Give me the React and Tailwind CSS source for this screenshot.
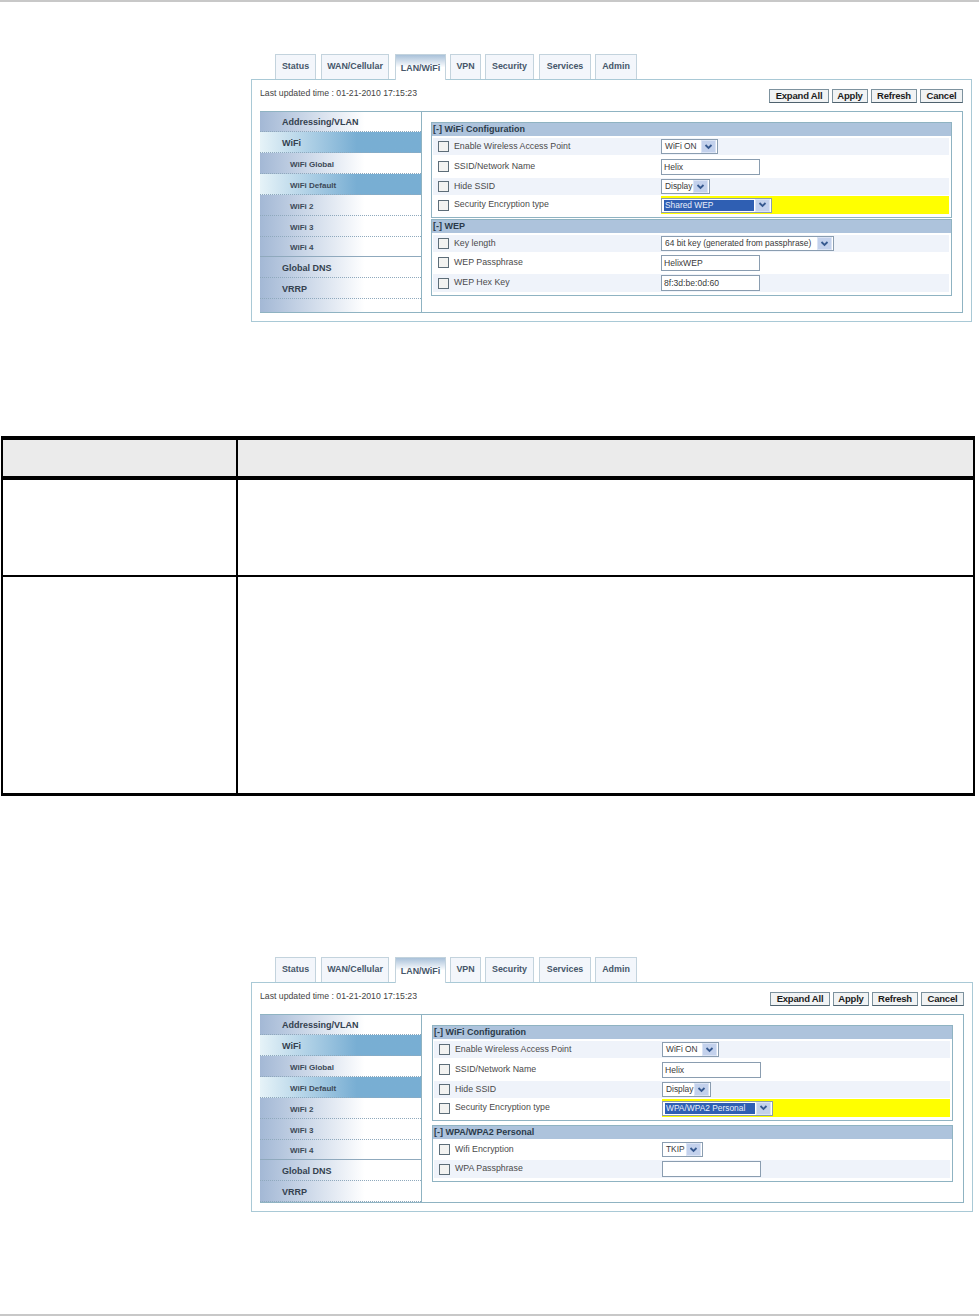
const font = { fontFamily: '"Liberation Sans", Arial, sans-serif' };

function Chevron() {
  return (
    <span className="flex items-center justify-center w-[15px] h-[13px] bg-[#c3d1ec] border border-[#dbe4f5] shrink-0">
      <svg width="9" height="6" viewBox="0 0 9 6">
        <polyline points="1.5,1 4.5,4 7.5,1" fill="none" stroke="#36598f" strokeWidth="1.8" />
      </svg>
    </span>
  );
}

function Select({ text, w, selected }) {
  return (
    <div className={`flex items-center justify-between h-[15px] border border-[#8a9db0] bg-white pl-[3px] pr-px text-[8.4px] text-[#3a3a3a] ${w}`}>
      <span className={selected ? 'flex-1 -ml-px mr-px h-[11px] leading-[11px] bg-[#2f5fb3] text-[#e8eefa] pl-px' : 'whitespace-nowrap'}>{text}</span>
      <Chevron />
    </div>
  );
}

function Input({ text }) {
  return (
    <div className="w-[99px] h-[16px] border border-[#8a9db0] bg-white pl-[2px] text-[8.6px] leading-[14px] text-[#3a3a3a]">{text}</div>
  );
}

function Row({ label, alt, cls, yellow, children }) {
  return (
    <div className={`flex items-center ml-px mr-[2px] ${cls} ${alt ? 'bg-[#eff3fa]' : ''}`}>
      <div className="w-[5px]" />
      <div className="w-[11px] h-[11px] border border-[#5d6d78] bg-[#f3f3f1] shrink-0" />
      <div className="w-[5px]" />
      <div className="w-[207px] text-[8.8px] text-[#4a4a4a] whitespace-nowrap">{label}</div>
      <div className={`flex-1 self-stretch flex items-center ${yellow ? 'bg-[#ffff00]' : ''}`}>{children}</div>
    </div>
  );
}

function Box({ title, cls, children }) {
  return (
    <div className={`border border-[#8fb3c2] ${cls}`}>
      <div className="h-[13px] bg-[#adc3dc] pl-px text-[9px] leading-[13px] font-bold text-[#2a3a4a]">{title}</div>
      {children}
    </div>
  );
}

function Tab({ label, w, ml, active }) {
  return (
    <div
      className={`${w} ${ml} flex items-center justify-center border border-b-0 border-[#c3d3dd] text-[8.9px] font-bold text-[#46566a] whitespace-nowrap ${
        active ? 'relative h-[26px] pt-[3px] bg-gradient-to-b from-[#a9c1d9] via-white to-white' : 'h-[25px] bg-[#f3f6fb]'
      }`}
    >
      {label}
    </div>
  );
}

function Btn({ label, w, ml }) {
  return (
    <div className={`${w} ${ml} h-[14px] flex items-center justify-center bg-[#f1f3f4] border border-[#7d929e] border-b-[#4f626e] text-[9.5px] font-bold tracking-[-0.2px] text-[#1c1c1c] whitespace-nowrap`}>
      {label}
    </div>
  );
}

function SideItem({ label, h, sub, active, solid }) {
  return (
    <div
      className={`${h} flex items-center pt-[3px] border-b border-dotted border-[#8fa9bd] font-bold whitespace-nowrap ${
        sub ? 'pl-[30px] text-[8px] text-[#3d4a58]' : 'pl-[22px] text-[9px] text-[#34414f]'
      } ${active ? 'bg-gradient-to-r from-[#e6f3f8] to-[#78aed3] to-60%' : ''} ${solid ? 'border-solid border-[#7f9fb5]' : ''}`}
    >
      {label}
    </div>
  );
}

function Panel({ wCls, hCls, boxPad, boxes }) {
  return (
    <div className="ml-[251px]">
      <div className="flex h-[25px] pl-[24px] items-start">
        <Tab label="Status" w="w-[41px]" ml="ml-0" />
        <Tab label="WAN/Cellular" w="w-[68px]" ml="ml-[5px]" />
        <Tab label="LAN/WiFi" w="w-[51px]" ml="ml-[6px]" active />
        <Tab label="VPN" w="w-[31px]" ml="ml-[4px]" />
        <Tab label="Security" w="w-[49px]" ml="ml-[4px]" />
        <Tab label="Services" w="w-[52px]" ml="ml-[5px]" />
        <Tab label="Admin" w="w-[42px]" ml="ml-[4px]" />
      </div>
      <div className={`${wCls} ${hCls} border border-[#a9c9d6] bg-white flex flex-col`}>
        <div className="h-[31px] shrink-0 flex justify-between pl-[8px] pr-[8px]">
          <span className="mt-[7px] h-[12px] text-[8.7px] leading-[12px] text-[#444]">Last updated time : 01-21-2010 17:15:23</span>
          <div className="flex mt-[9px]">
            <Btn label="Expand All" w="w-[60px]" ml="ml-0" />
            <Btn label="Apply" w="w-[36px]" ml="ml-[3px]" />
            <Btn label="Refresh" w="w-[46px]" ml="ml-[3px]" />
            <Btn label="Cancel" w="w-[43px]" ml="ml-[3px]" />
          </div>
        </div>
        <div className="flex-1 flex ml-[8px] mb-[8px] mr-[8px]">
          <div className="w-[161px] shrink-0 border-y border-[#8fb3c2] bg-gradient-to-r from-[#a3b8d5] to-white to-65%">
            <SideItem label="Addressing/VLAN" h="h-[20px]" />
            <SideItem label="WiFi" h="h-[21px]" active />
            <SideItem label="WiFi Global" h="h-[21px]" sub />
            <SideItem label="WiFi Default" h="h-[21px]" sub active />
            <SideItem label="WiFi 2" h="h-[21px]" sub />
            <SideItem label="WiFi 3" h="h-[21px]" sub />
            <SideItem label="WiFi 4" h="h-[20px]" sub solid />
            <SideItem label="Global DNS" h="h-[21px]" />
            <SideItem label="VRRP" h="h-[21px]" />
          </div>
          <div className={`flex-1 border border-[#8fb3c2] pt-[10px] ${boxPad} pr-[10px]`}>{boxes}</div>
        </div>
      </div>
    </div>
  );
}

const wifiRows = (encText) => (
  <>
    <Row label="Enable Wireless Access Point" alt cls="mt-[2px] h-[17px]"><Select text="WiFi ON" w="w-[57px]" /></Row>
    <Row label="SSID/Network Name" cls="mt-[3px] h-[17px]"><Input text="Helix" /></Row>
    <Row label="Hide SSID" alt cls="mt-[3px] h-[17px]"><Select text="Display" w="w-[49px]" /></Row>
    <Row label="Security Encryption type" yellow cls="mt-px h-[18px]"><Select text={encText} w="w-[111px]" selected /></Row>
  </>
);

export default function App() {
  return (
    <div style={font} className="h-[1316px] flex flex-col bg-white overflow-hidden">
      <div className="h-[2px] bg-[#c8c8c8] shrink-0" />
      <div className="mt-[52px]">
        <Panel
          wCls="w-[721px]"
          hCls="h-[243px]"
          boxPad="pl-[9px]"
          boxes={
            <>
              <Box title="[-] WiFi Configuration" cls="h-[96px]">{wifiRows('Shared WEP')}</Box>
              <Box title="[-] WEP" cls="mt-px h-[77px]">
                <Row label="Key length" alt cls="mt-[2px] h-[17px]"><Select text="64 bit key (generated from passphrase)" w="w-[173px]" /></Row>
                <Row label="WEP Passphrase" cls="mt-[2px] h-[17px]"><Input text="HelixWEP" /></Row>
                <Row label="WEP Hex Key" alt cls="mt-[3px] h-[18px]"><Input text="8f:3d:be:0d:60" /></Row>
              </Box>
            </>
          }
        />
      </div>

      <div className="mt-[114px] ml-px w-[974px] h-[360px] flex flex-col border-x-2 border-black shrink-0">
        <div className="h-[44px] flex border-y-4 border-black bg-[#ebebeb]">
          <div className="w-[235px] border-r-2 border-black" />
        </div>
        <div className="h-[97px] flex border-b-2 border-black">
          <div className="w-[235px] border-r-2 border-black" />
        </div>
        <div className="flex-1 flex border-b-[3px] border-black">
          <div className="w-[235px] border-r-2 border-black" />
        </div>
      </div>

      <div className="mt-[161px]">
        <Panel
          wCls="w-[722px]"
          hCls="h-[230px]"
          boxPad="pl-[10px]"
          boxes={
            <>
              <Box title="[-] WiFi Configuration" cls="h-[96px]">{wifiRows('WPA/WPA2 Personal')}</Box>
              <Box title="[-] WPA/WPA2 Personal" cls="mt-[4px] h-[57px]">
                <Row label="Wifi Encryption" cls="h-[21px]"><Select text="TKIP" w="w-[41px]" /></Row>
                <Row label="WPA Passphrase" alt cls="h-[18px]"><Input text="" /></Row>
              </Box>
            </>
          }
        />
      </div>

      <div className="mt-auto h-[2px] bg-[#c8c8c8] shrink-0" />
    </div>
  );
}
